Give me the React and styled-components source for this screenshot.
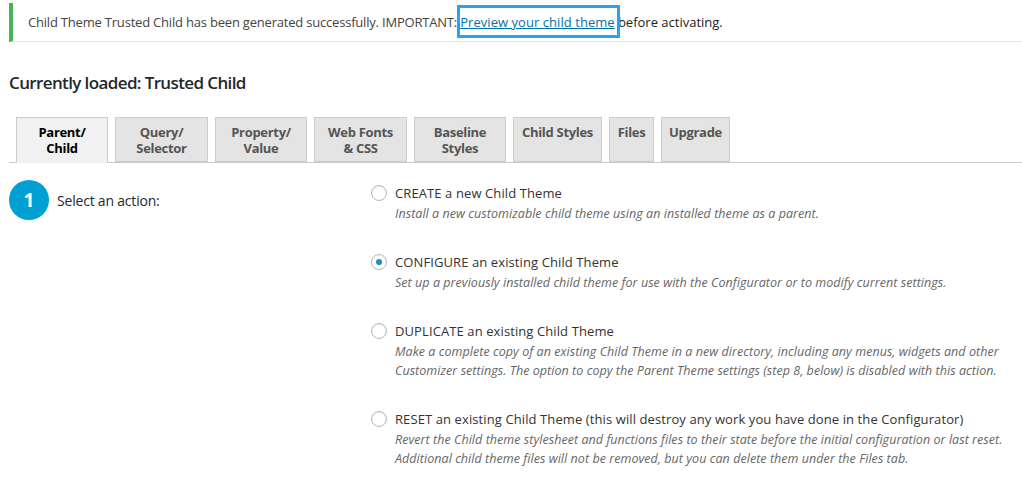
import React from "react";
import styled, { createGlobalStyle } from "styled-components";

const Global = createGlobalStyle`
  html, body { margin: 0; padding: 0; background: #fff; }
  body {
    font-family: "Open Sans", "Noto Sans", sans-serif;
    font-size: 13px;
    letter-spacing: 0.05px;
    color: #444;
    overflow: hidden;
  }
`;

const Page = styled.div`
  padding: 3px 0 0 9px;
  width: 1022px;
  box-sizing: border-box;
`;

const Notice = styled.div`
  border-left: 4px solid #46b450;
  border-bottom: 1px solid #e2e2e2;
  height: 38px;
  display: flex;
  align-items: center;
  padding-left: 15px;
  color: #444;
  letter-spacing: -0.2px;
`;

const Dark = styled.span`
  color: #222;
  letter-spacing: 0;
`;

const Highlight = styled.span`
  position: relative;
  &::after {
    content: "";
    position: absolute;
    top: -8px;
    bottom: -7px;
    left: -3px;
    right: -5px;
    border: 3px solid #2f9ff0;
    pointer-events: none;
  }
`;

const Link = styled.a`
  color: #0073aa;
  text-decoration: underline;
  letter-spacing: 0.05px;
  cursor: pointer;
`;

const Heading = styled.h2`
  margin: 29px 0 0;
  font-size: 17px;
  font-weight: 600;
  color: #23282d;
  line-height: 24px;
  letter-spacing: -0.62px;
`;

const TabBar = styled.div`
  display: flex;
  align-items: flex-end;
  gap: 7px;
  margin-top: 22px;
  padding-left: 7px;
  border-bottom: 1px solid #ccc;
  height: 45px;
`;

const Tab = styled.div`
  box-sizing: border-box;
  width: ${(p) => p.$w}px;
  padding-top: 6px;
  height: ${(p) => (p.$active ? "46px" : "45px")};
  margin-bottom: ${(p) => (p.$active ? "-1px" : "0")};
  background: ${(p) => (p.$active ? "#f1f1f1" : "#e4e4e4")};
  border: 1px solid #ccc;
  border-bottom: ${(p) => (p.$active ? "none" : "1px solid #ccc")};
  text-align: center;
  font-weight: 700;
  font-size: 13px;
  line-height: 16px;
  letter-spacing: -0.3px;
  color: ${(p) => (p.$active ? "#000" : "#555")};
  white-space: nowrap;
`;

const Content = styled.div`
  display: grid;
  grid-template-columns: 362px 1fr;
  margin-top: 17px;
`;

const StepCell = styled.div`
  display: flex;
  align-items: center;
  gap: 8px;
  height: 40px;
  align-self: start;
`;

const StepNum = styled.div`
  width: 40px;
  height: 40px;
  border-radius: 50%;
  background: #00a0d2;
  color: #fff;
  font-weight: 700;
  font-size: 19px;
  display: flex;
  align-items: center;
  justify-content: center;
`;

const StepLabel = styled.div`
  font-size: 14px;
  letter-spacing: -0.2px;
  color: #23282d;
`;

const Options = styled.div`
  padding-top: 3px;
  display: flex;
  flex-direction: column;
  gap: 29px;
`;

const Option = styled.div`
  display: grid;
  grid-template-columns: 16px 1fr;
  column-gap: 8px;
`;

const Radio = styled.span`
  width: 16px;
  height: 16px;
  box-sizing: border-box;
  border-radius: 50%;
  border: 1px solid #b4b9be;
  background: #fff;
  box-shadow: inset 0 1px 2px rgba(0, 0, 0, 0.07);
  margin-top: 2px;
  display: flex;
  align-items: center;
  justify-content: center;
  &::after {
    content: "";
    display: ${(p) => (p.$checked ? "block" : "none")};
    width: 6px;
    height: 6px;
    border-radius: 50%;
    background: #1e8cbe;
  }
`;

const OptLabel = styled.div`
  line-height: 20px;
  color: #333;
  letter-spacing: 0.1px;
`;

const Desc = styled.div`
  grid-column: 2;
  margin-top: 1px;
  font-style: italic;
  font-size: 12.5px;
  line-height: 19px;
  color: #666;
  letter-spacing: 0.05px;
`;

const options = [
  {
    label: "CREATE a new Child Theme",
    desc: ["Install a new customizable child theme using an installed theme as a parent."],
  },
  {
    label: "CONFIGURE an existing Child Theme",
    desc: ["Set up a previously installed child theme for use with the Configurator or to modify current settings."],
    checked: true,
  },
  {
    label: "DUPLICATE an existing Child Theme",
    desc: [
      "Make a complete copy of an existing Child Theme in a new directory, including any menus, widgets and other",
      "Customizer settings. The option to copy the Parent Theme settings (step 8, below) is disabled with this action.",
    ],
  },
  {
    label: "RESET an existing Child Theme (this will destroy any work you have done in the Configurator)",
    desc: [
      "Revert the Child theme stylesheet and functions files to their state before the initial configuration or last reset.",
      "Additional child theme files will not be removed, but you can delete them under the Files tab.",
    ],
  },
];

const tabs = [
  { t: ["Parent/", "Child"], w: 92, active: true },
  { t: ["Query/", "Selector"], w: 93 },
  { t: ["Property/", "Value"], w: 92 },
  { t: ["Web Fonts", "& CSS"], w: 93 },
  { t: ["Baseline", "Styles"], w: 92 },
  { t: ["Child Styles"], w: 89 },
  { t: ["Files"], w: 45 },
  { t: ["Upgrade"], w: 69 },
];

export default function App() {
  return (
    <Page>
      <Global />
      <Notice>
        <span>
          Child Theme Trusted Child has been generated successfully. IMPORTANT:{" "}
          <Highlight>
            <Link>Preview your child theme</Link>
          </Highlight>{" "}
          <Dark>before activating.</Dark>
        </span>
      </Notice>
      <Heading>Currently loaded: Trusted Child</Heading>
      <TabBar>
        {tabs.map((tab, i) => (
          <Tab key={i} $w={tab.w} $active={tab.active}>
            {tab.t.map((line, j) => (
              <div key={j}>{line}</div>
            ))}
          </Tab>
        ))}
      </TabBar>
      <Content>
        <StepCell>
          <StepNum>1</StepNum>
          <StepLabel>Select an action:</StepLabel>
        </StepCell>
        <Options>
          {options.map((o, i) => (
            <Option key={i}>
              <Radio $checked={o.checked} />
              <OptLabel>{o.label}</OptLabel>
              <Desc>
                {o.desc.map((d, j) => (
                  <div key={j}>{d}</div>
                ))}
              </Desc>
            </Option>
          ))}
        </Options>
      </Content>
    </Page>
  );
}
